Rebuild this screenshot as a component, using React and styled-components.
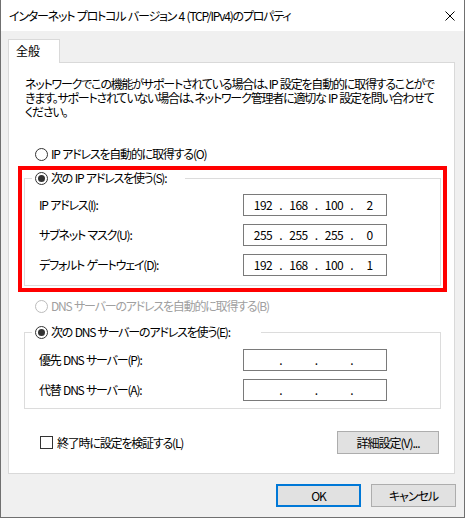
import React from "react";
import styled, { createGlobalStyle } from "styled-components";

const Global = createGlobalStyle`
  html, body { margin: 0; padding: 0; background: #ffffff; }
  * { box-sizing: border-box; }
  body {
    font-family: "Noto Sans CJK JP", sans-serif;
    font-size: 12px;
    letter-spacing: -1.2px;
    word-spacing: 1px;
    color: #000;
    font-feature-settings: "palt" 1;
  }
`;

const Window = styled.div`
  width: 465px;
  height: 518px;
  border: 1px solid #707070;
  border-top: none;
  background: #f0f0f0;
  display: flex;
  flex-direction: column;
`;

const TitleBar = styled.div`
  height: 31px;
  flex: none;
  background: #ffffff;
  display: flex;
  align-items: center;
  justify-content: space-between;
  padding: 0 9px 0 8px;
  line-height: 16px;
  white-space: nowrap;
`;

const CloseIcon = () => (
  <svg width="10" height="10" viewBox="0 0 10 10" aria-hidden="true">
    <path d="M0.5 0.5 L9.5 9.5 M9.5 0.5 L0.5 9.5" stroke="#000" strokeWidth="1" fill="none" />
  </svg>
);

const Body = styled.div`
  flex: 1;
  padding: 8px 9px 0 7px;
  display: flex;
  flex-direction: column;
`;

const TabStrip = styled.div`
  display: flex;
  height: 23px;
`;

const Tab = styled.div`
  position: relative;
  z-index: 1;
  width: 52px;
  height: 24px;
  background: #ffffff;
  border: 1px solid #d9d9d9;
  border-bottom: none;
  padding-left: 7px;
  line-height: 22px;
  letter-spacing: 0;
`;

const Panel = styled.div`
  height: 412px;
  background: #ffffff;
  border: 1px solid #d9d9d9;
  padding: 0 7px 0 9px;
  display: flex;
  flex-direction: column;
`;

const Intro = styled.p`
  margin: 14px 0 0 7px;
  line-height: 14px;
  white-space: nowrap;
`;

const OptionRow = styled.div`
  display: flex;
  align-items: center;
  gap: 3px;
  height: 16px;
  line-height: 16px;
  margin: ${p => p.$mt || 0}px 0 0 ${p => p.$ml ?? 17}px;
  color: ${p => (p.$disabled ? "#a0a0a0" : "#000")};
  white-space: nowrap;
`;

const RadioMark = styled.span`
  width: 13px;
  height: 13px;
  flex: none;
  border-radius: 50%;
  border: 1px solid ${p => (p.$disabled ? "#bcbcbc" : "#333333")};
  background: #ffffff;
  display: flex;
  align-items: center;
  justify-content: center;
  &::after {
    content: "";
    width: 7px;
    height: 7px;
    border-radius: 50%;
    background: ${p => (p.$checked ? "#333333" : "transparent")};
  }
`;

const CheckMark = styled.span`
  width: 13px;
  height: 13px;
  flex: none;
  border: 1px solid #333333;
  background: #ffffff;
`;

const Highlight = styled.div`
  margin-top: 4px;
  width: 429px;
  border: 4px solid #ff0000;
  padding: 0 2px 2px 2px;
`;

const Group = styled.fieldset`
  margin: ${p => p.$mt || 0}px 0 0 ${p => p.$ml || 0}px;
  padding: 0;
  width: 417px;
  min-width: 0;
  border: 1px solid #dcdcdc;
`;

const Legend = styled.legend`
  margin-left: 7px;
  padding: 0 ${p => p.$pr}px 0 3px;
  height: 16px;
  line-height: 16px;
  display: flex;
  align-items: center;
  gap: 3px;
  white-space: nowrap;
`;

const GroupContent = styled.div`
  padding: ${p => p.$pt}px 0 ${p => p.$pb}px 14px;
  display: flex;
  flex-direction: column;
  gap: 8px;
`;

const FieldRow = styled.div`
  display: flex;
  align-items: center;
  height: 22px;
`;

const FieldLabel = styled.span`
  width: 204px;
  flex: none;
  line-height: 16px;
  white-space: nowrap;
`;

const IpBox = styled.div`
  width: 144px;
  height: 22px;
  border: 1px solid #7a7a7a;
  background: #ffffff;
  padding-left: 6px;
  display: flex;
  align-items: center;
  line-height: 16px;
  letter-spacing: -0.5px;
`;

const Octet = styled.span`
  width: 26px;
  text-align: center;
`;

const Dot = styled.span`
  width: 9.5px;
  text-align: center;
`;

const BottomRow = styled.div`
  margin: 22px 8px 0 22px;
  display: flex;
  align-items: center;
  justify-content: space-between;
`;

const CheckLabel = styled.label`
  display: flex;
  align-items: center;
  gap: 4px;
  line-height: 16px;
  white-space: nowrap;
`;

const Button = styled.button`
  font: inherit;
  font-feature-settings: "palt" 1;
  letter-spacing: -1px;
  color: #000;
  width: ${p => p.$w}px;
  height: 23px;
  background: #e1e1e1;
  border: ${p => (p.$default ? "2px solid #0078d7" : "1px solid #adadad")};
  padding: 0;
  line-height: 16px;
  white-space: nowrap;
`;

const Footer = styled.div`
  display: flex;
  justify-content: flex-end;
  gap: 10px;
  margin-top: 10px;
  margin-right: -1px;
`;

const IpField = ({ value }) => {
  const parts = value ? value.split(".") : ["", "", "", ""];
  return (
    <IpBox>
      {parts.map((p, i) => (
        <React.Fragment key={i}>
          <Octet>{p}</Octet>
          {i < 3 && <Dot>.</Dot>}
        </React.Fragment>
      ))}
    </IpBox>
  );
};

export default function App() {
  return (
    <>
      <Global />
      <Window>
        <TitleBar>
          <span>インターネット プロトコル バージョン 4 (TCP/IPv4)のプロパティ</span>
          <CloseIcon />
        </TitleBar>
        <Body>
          <TabStrip>
            <Tab>全般</Tab>
          </TabStrip>
          <Panel>
            <Intro>
              ネットワークでこの機能がサポートされている場合は、IP 設定を自動的に取得することがで
              <br />
              きます。サポートされていない場合は、ネットワーク管理者に適切な IP 設定を問い合わせて
              <br />
              ください。
            </Intro>
            <OptionRow $mt={27}>
              <RadioMark />
              IP アドレスを自動的に取得する(O)
            </OptionRow>
            <Highlight>
              <Group>
                <Legend $pr={19}>
                  <RadioMark $checked />
                  次の IP アドレスを使う(S):
                </Legend>
                <GroupContent $pt={8} $pb={9}>
                  <FieldRow>
                    <FieldLabel>IP アドレス(I):</FieldLabel>
                    <IpField value="192.168.100.2" />
                  </FieldRow>
                  <FieldRow>
                    <FieldLabel>サブネット マスク(U):</FieldLabel>
                    <IpField value="255.255.255.0" />
                  </FieldRow>
                  <FieldRow>
                    <FieldLabel>デフォルト ゲートウェイ(D):</FieldLabel>
                    <IpField value="192.168.100.1" />
                  </FieldRow>
                </GroupContent>
              </Group>
            </Highlight>
            <OptionRow $mt={6} $disabled>
              <RadioMark $disabled />
              DNS サーバーのアドレスを自動的に取得する(B)
            </OptionRow>
            <Group $mt={10} $ml={6}>
              <Legend $pr={31}>
                <RadioMark $checked />
                次の DNS サーバーのアドレスを使う(E):
              </Legend>
              <GroupContent $pt={9} $pb={7}>
                <FieldRow>
                  <FieldLabel>優先 DNS サーバー(P):</FieldLabel>
                  <IpField />
                </FieldRow>
                <FieldRow>
                  <FieldLabel>代替 DNS サーバー(A):</FieldLabel>
                  <IpField />
                </FieldRow>
              </GroupContent>
            </Group>
            <BottomRow>
              <CheckLabel>
                <CheckMark />
                終了時に設定を検証する(L)
              </CheckLabel>
              <Button $w={102}>詳細設定(V)...</Button>
            </BottomRow>
          </Panel>
          <Footer>
            <Button $w={85} $default>OK</Button>
            <Button $w={85}>キャンセル</Button>
          </Footer>
        </Body>
      </Window>
    </>
  );
}
